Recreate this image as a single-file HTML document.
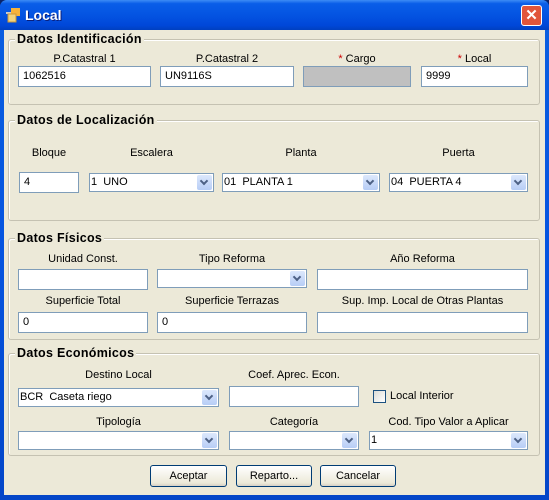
<!DOCTYPE html>
<html><head><meta charset="utf-8"><style>
*{box-sizing:border-box;margin:0;padding:0}
body{width:549px;height:500px;overflow:hidden;background:#0a246a;font-family:"Liberation Sans",sans-serif;font-size:11px;color:#000;position:relative}
#win{position:absolute;left:0;top:0;width:549px;height:500px;background:linear-gradient(#0a5fe0,#0554e0 50%,#0446c8);border-radius:7px 7px 0 0}
#title{position:absolute;left:0;top:0;width:549px;height:30px;background:linear-gradient(#3d8cf5 0,#0a5ee8 12%,#0454e2 50%,#0047d8 85%,#0040c0 100%);border-radius:7px 7px 0 0}
#title .t{position:absolute;left:25px;top:7px;color:#fff;font-weight:bold;font-size:14px;text-shadow:1px 1px #0a1e7a}
#close{position:absolute;left:521px;top:5px;width:21px;height:21px;background:#e1553b;border:1px solid #fff;border-radius:3px;color:#fff;font-size:15px;font-weight:bold;text-align:center;line-height:19px}
.g{position:absolute;border:1px solid #c5c2b2;border-radius:3px;box-shadow:inset 1px 1px #fff}
.gt{position:absolute;background:#ece9d8;font-weight:bold;font-size:12.5px;color:#000;padding:0 2px;letter-spacing:0.3px}
.l{position:absolute;text-align:center;white-space:nowrap}
.i{position:absolute;height:21px;background:#fff;border:1px solid #7f9db9;padding:3px 4px;font-size:11px}
.c{position:absolute;height:19px;background:#fff;border:1px solid #7f9db9;padding:2px 1px;font-size:11px}
.c:after{content:"";position:absolute;right:1px;top:1px;width:15px;height:15px;background:linear-gradient(#dce8fc,#b7cdf6);border-radius:2px}
.c:before{content:"";position:absolute;right:6px;top:4px;width:4px;height:4px;border-right:2px solid #4d6185;border-bottom:2px solid #4d6185;transform:rotate(45deg);z-index:1}
.r{color:#c00}
.b{position:absolute;top:465px;height:22px;border:1px solid #003c74;border-radius:3px;background:linear-gradient(#fff,#ece9d8 85%,#d6d0c5);text-align:center;line-height:20px}
</style></head><body>
<div id="win">
<div id="title">
<svg style="position:absolute;left:5px;top:7px" width="16" height="16"><rect x="1" y="5" width="7" height="2" fill="#ccc"/><rect x="6" y="1" width="9" height="8" fill="#f7b33b"/><rect x="3" y="7" width="8" height="8" fill="#f2d47e" stroke="#c9963a"/></svg>
<div class="t">Local</div>
<div id="close">✕</div>
</div>
</div>
<div style="position:absolute;left:4px;top:30px;width:541px;height:465px;background:#ece9d8"></div>

<div class="g" style="left:8px;top:39px;width:532px;height:66px"></div>
<div class="gt" style="left:15px;top:32px">Datos Identificación</div>
<div class="l" style="left:18px;top:53px;width:133px">P.Catastral 1</div>
<div class="l" style="left:160px;top:53px;width:134px">P.Catastral 2</div>
<div class="l" style="left:303px;top:53px;width:108px"><span class="r">*</span> Cargo</div>
<div class="l" style="left:421px;top:53px;width:107px"><span class="r">*</span> Local</div>
<div class="i" style="left:18px;top:66px;width:133px">1062516</div>
<div class="i" style="left:160px;top:66px;width:134px">UN9116S</div>
<div class="i" style="left:303px;top:66px;width:108px;background:#c0c0c0"></div>
<div class="i" style="left:421px;top:66px;width:107px">9999</div>

<div class="g" style="left:8px;top:120px;width:532px;height:101px"></div>
<div class="gt" style="left:15px;top:113px">Datos de Localización</div>
<div class="l" style="left:19px;top:147px;width:60px">Bloque</div>
<div class="l" style="left:89px;top:147px;width:125px">Escalera</div>
<div class="l" style="left:222px;top:147px;width:158px">Planta</div>
<div class="l" style="left:389px;top:147px;width:139px">Puerta</div>
<div class="i" style="left:19px;top:172px;width:60px">4</div>
<div class="c" style="left:89px;top:173px;width:125px">1&nbsp; UNO</div>
<div class="c" style="left:222px;top:173px;width:158px">01&nbsp; PLANTA 1</div>
<div class="c" style="left:389px;top:173px;width:139px">04&nbsp; PUERTA 4</div>

<div class="g" style="left:8px;top:238px;width:532px;height:102px"></div>
<div class="gt" style="left:15px;top:231px">Datos Físicos</div>
<div class="l" style="left:18px;top:253px;width:130px">Unidad Const.</div>
<div class="l" style="left:157px;top:253px;width:150px">Tipo Reforma</div>
<div class="l" style="left:317px;top:253px;width:211px">Año Reforma</div>
<div class="i" style="left:18px;top:269px;width:130px"></div>
<div class="c" style="left:157px;top:269px;width:150px"></div>
<div class="i" style="left:317px;top:269px;width:211px"></div>
<div class="l" style="left:18px;top:295px;width:130px">Superficie Total</div>
<div class="l" style="left:157px;top:295px;width:150px">Superficie Terrazas</div>
<div class="l" style="left:317px;top:295px;width:211px">Sup. Imp. Local de Otras Plantas</div>
<div class="i" style="left:18px;top:312px;width:130px">0</div>
<div class="i" style="left:157px;top:312px;width:150px">0</div>
<div class="i" style="left:317px;top:312px;width:211px"></div>

<div class="g" style="left:8px;top:353px;width:532px;height:103px"></div>
<div class="gt" style="left:15px;top:346px">Datos Económicos</div>
<div class="l" style="left:18px;top:369px;width:201px">Destino Local</div>
<div class="l" style="left:229px;top:369px;width:130px">Coef. Aprec. Econ.</div>
<div class="c" style="left:18px;top:388px;width:201px">BCR&nbsp; Caseta riego</div>
<div class="i" style="left:229px;top:386px;width:130px"></div>
<div style="position:absolute;left:373px;top:390px;width:13px;height:13px;border:1px solid #1c5180;background:linear-gradient(135deg,#dcdcd6,#fff)"></div>
<div class="l" style="left:390px;top:390px">Local Interior</div>
<div class="l" style="left:18px;top:416px;width:201px">Tipología</div>
<div class="l" style="left:229px;top:416px;width:130px">Categoría</div>
<div class="l" style="left:369px;top:416px;width:159px">Cod. Tipo Valor a Aplicar</div>
<div class="c" style="left:18px;top:431px;width:201px"></div>
<div class="c" style="left:229px;top:431px;width:130px"></div>
<div class="c" style="left:369px;top:431px;width:159px">1</div>

<div class="b" style="left:150px;width:77px">Aceptar</div>
<div class="b" style="left:236px;width:76px">Reparto...</div>
<div class="b" style="left:320px;width:76px">Cancelar</div>
</body></html>
